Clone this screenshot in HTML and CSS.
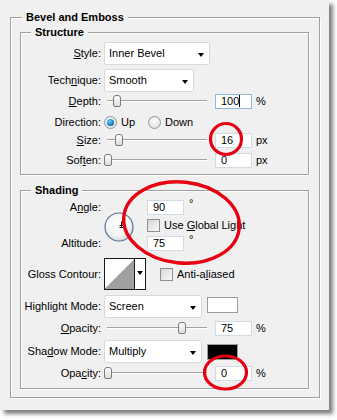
FILE: index.html
```html
<!DOCTYPE html>
<html lang="en">
<head>
<meta charset="utf-8">
<title>Bevel and Emboss</title>
<link rel="stylesheet" href="styles.css">
</head>
<body>
<div class="panel">
  <section class="group outer">
    <h2 class="legend legend-outer">Bevel and Emboss</h2>

    <section class="group inner structure">
      <h3 class="legend">Structure</h3>

      <div class="row r-style">
        <span class="lbl"><u>S</u>tyle:</span>
        <div class="select sel-style"><span>Inner Bevel</span><i class="caret"></i></div>
      </div>

      <div class="row r-tech">
        <span class="lbl">Tech<u>n</u>ique:</span>
        <div class="select sel-tech"><span>Smooth</span><i class="caret"></i></div>
      </div>

      <div class="row r-depth">
        <span class="lbl"><u>D</u>epth:</span>
        <div class="ctrl">
          <div class="slider"><span class="track"></span><span class="thumb" style="left:9px"></span></div>
          <div class="num focus">100<span class="cursor"></span></div>
          <span class="unit">%</span>
        </div>
      </div>

      <div class="row r-dir">
        <span class="lbl">Direction:</span>
        <div class="ctrl">
          <span class="opt opt-up"><span class="radio on"></span>Up</span>
          <span class="opt"><span class="radio"></span>Down</span>
        </div>
      </div>

      <div class="row r-size">
        <span class="lbl"><u>S</u>ize:</span>
        <div class="ctrl">
          <div class="slider"><span class="track"></span><span class="thumb" style="left:11px"></span></div>
          <div class="num">16</div>
          <span class="unit">px</span>
        </div>
      </div>

      <div class="row r-soften">
        <span class="lbl">Sof<u>t</u>en:</span>
        <div class="ctrl">
          <div class="slider"><span class="track"></span><span class="thumb" style="left:0px"></span></div>
          <div class="num">0</div>
          <span class="unit">px</span>
        </div>
      </div>
    </section>

    <section class="group inner shading">
      <h3 class="legend">Shading</h3>

      <div class="angle-block">
        <span class="lbl a-lbl">A<u>n</u>gle:</span>
        <div class="dial">
          <svg width="30" height="30" viewBox="0 0 30 30">
            <defs>
              <radialGradient id="dg" cx="45%" cy="40%" r="60%">
                <stop offset="0" stop-color="#ffffff"/>
                <stop offset="0.7" stop-color="#f2f2f2"/>
                <stop offset="1" stop-color="#d8dbe0"/>
              </radialGradient>
            </defs>
            <circle cx="15" cy="15" r="14" fill="url(#dg)" stroke="#5d7392" stroke-width="1.2"/>
            <path d="M17.5 9.5v5.5M15.5 13.5h5M15.5 15.5h5" stroke="#111" stroke-width="1" fill="none"/>
          </svg>
        </div>
        <div class="a-in a-r1"><div class="num">90</div><span class="deg">°</span></div>
        <div class="a-in a-r2"><span class="check"></span><span>Use <u>G</u>lobal Light</span></div>
        <span class="lbl alt-lbl">Altitude:</span>
        <div class="a-in a-r3"><div class="num">75</div><span class="deg">°</span></div>
      </div>

      <div class="row r-gloss">
        <span class="lbl">Gloss Contour:</span>
        <div class="ctrl">
          <div class="contour"><span class="curve"></span><span class="c-arrow"><i class="caret"></i></span></div>
          <span class="check anti"></span><span>Anti-a<u>l</u>iased</span>
        </div>
      </div>

      <div class="row r-hmode">
        <span class="lbl">Highlight Mode:</span>
        <div class="ctrl">
          <div class="select sel-mode"><span>Screen</span><i class="caret"></i></div>
          <span class="swatch white"></span>
        </div>
      </div>

      <div class="row r-hop">
        <span class="lbl"><u>O</u>pacity:</span>
        <div class="ctrl">
          <div class="slider"><span class="track"></span><span class="thumb" style="left:74px"></span></div>
          <div class="num">75</div>
          <span class="unit">%</span>
        </div>
      </div>

      <div class="row r-smode">
        <span class="lbl">Sha<u>d</u>ow Mode:</span>
        <div class="ctrl">
          <div class="select sel-mode"><span>Multiply</span><i class="caret"></i></div>
          <span class="swatch black"></span>
        </div>
      </div>

      <div class="row r-sop">
        <span class="lbl">Opa<u>c</u>ity:</span>
        <div class="ctrl">
          <div class="slider"><span class="track"></span><span class="thumb" style="left:0px"></span></div>
          <div class="num">0</div>
          <span class="unit">%</span>
        </div>
      </div>
    </section>
  </section>
</div>

<svg class="marks" width="337" height="420" viewBox="0 0 337 420">
  <circle cx="226" cy="139" r="15.5" fill="none" stroke="#e60012" stroke-width="3.2"/>
  <ellipse cx="181.5" cy="222.5" rx="58" ry="40.5" transform="rotate(6 181.5 222.5)" fill="none" stroke="#e60012" stroke-width="3.4"/>
  <ellipse cx="225.5" cy="372.5" rx="21" ry="16.5" fill="none" stroke="#e60012" stroke-width="3.2"/>
</svg>
</body>
</html>
```

FILE: styles.css
```css
* { box-sizing: border-box; }

html, body {
  margin: 0;
  padding: 0;
  background: #ffffff;
}

body {
  position: relative;
  width: 337px;
  height: 420px;
  overflow: hidden;
  font-family: "Liberation Sans", Arial, sans-serif;
  font-size: 11px;
  line-height: 13px;
  color: #000;
}

.panel {
  width: 329px;
  height: 410px;
  background: #f0f0f0;
  padding: 17px 9px 0 10px;
  box-shadow: 4px 4px 4px rgba(0, 0, 0, 0.5);
}

.group {
  position: relative;
  border: 1px solid #a0a0a0;
  box-shadow: 1px 1px 0 #ffffff, inset 1px 1px 0 #ffffff;
}

.outer {
  width: 310px;
  padding: 14px 10px 8px 9px;
}

.inner {
  width: 289px;
}

.structure {
  padding: 9px 0 6px 0;
}

.shading {
  margin-top: 15px;
  padding: 9px 0 7px 0;
}

.legend {
  position: absolute;
  top: -7px;
  margin: 0;
  padding: 0 4px;
  background: #f0f0f0;
  font-size: 11px;
  line-height: 13px;
  font-weight: bold;
}

.legend-outer { left: 11px; }
.inner > .legend { left: 10px; }

u { text-decoration: underline; text-underline-offset: 1px; }

.row {
  display: grid;
  grid-template-columns: 80px auto;
  column-gap: 3px;
  align-items: center;
}

.lbl {
  text-align: right;
  white-space: nowrap;
}

.ctrl {
  display: flex;
  align-items: center;
  height: 100%;
}

/* row spacing */
.r-style  { height: 23px; }
.r-tech   { height: 23px; margin-top: 4px; }
.r-depth  { height: 16px; margin-top: 1px; }
.r-dir    { height: 16px; margin-top: 5px; }
.r-size   { height: 16px; margin-top: 2px; }
.r-soften { height: 16px; margin-top: 4px; }

.r-gloss  { height: 32px; margin-top: 7px; }
.r-hmode  { height: 23px; margin-top: 5px; }
.r-hop    { height: 16px; margin-top: 2px; }
.r-smode  { height: 23px; margin-top: 4px; }
.r-sop    { height: 16px; margin-top: 2px; }

/* select */
.select {
  position: relative;
  height: 23px;
  background: #ffffff;
  border: 1px solid #d9d9d9;
  border-radius: 2px;
  display: flex;
  align-items: center;
  padding-left: 4px;
}
.sel-style { width: 106px; }
.sel-tech  { width: 90px; }
.sel-mode  { width: 98px; }

.caret {
  position: absolute;
  right: 5px;
  top: 50%;
  margin-top: -1px;
  width: 0;
  height: 0;
  border-left: 3.5px solid transparent;
  border-right: 3.5px solid transparent;
  border-top: 4px solid #000;
}

/* slider */
.slider {
  position: relative;
  width: 106px;
  height: 16px;
  margin-right: 5px;
}
.track {
  position: absolute;
  left: 3px;
  right: 3px;
  top: 7px;
  height: 2px;
  border-top: 1px solid #a3a3a3;
  border-bottom: 1px solid #ffffff;
}
.thumb {
  position: absolute;
  top: 2px;
  width: 8px;
  height: 12px;
  border: 1px solid #7b7b7b;
  border-radius: 3px 3px 2px 2px;
  background: linear-gradient(#ffffff, #dcdcdc);
}

/* number inputs */
.num {
  width: 37px;
  height: 15px;
  background: #ffffff;
  border: 1px solid #d2dbe4;
  padding-left: 5px;
  line-height: 13px;
  display: flex;
  align-items: center;
}
.num.focus { border-color: #8fb8de; }
.cursor {
  display: inline-block;
  width: 1px;
  height: 12px;
  background: #000;
}
.unit { margin-left: 4px; }
.deg { margin-left: 5px; align-self: flex-start; margin-top: -3px; }

/* radios */
.opt {
  display: flex;
  align-items: center;
}
.opt-up { width: 44px; }
.radio {
  position: relative;
  width: 13px;
  height: 13px;
  margin-right: 4px;
  border-radius: 50%;
  border: 1px solid #8e98a3;
  background: radial-gradient(circle at 50% 40%, #ffffff, #d6d6d6);
}
.radio.on::after {
  content: "";
  position: absolute;
  left: 2px;
  top: 2px;
  width: 7px;
  height: 7px;
  border-radius: 50%;
  background: radial-gradient(circle at 40% 35%, #6fd0ff, #0d6aa8 70%, #0a3f66);
}

/* checkbox */
.check {
  width: 13px;
  height: 13px;
  border: 1px solid #8f8f8f;
  background: linear-gradient(135deg, #d5d5d5, #fafafa);
  margin-right: 4px;
  flex: none;
}

/* angle block */
.angle-block {
  display: grid;
  grid-template-columns: 80px 30px auto;
  grid-template-rows: 15px 15px 15px;
  column-gap: 3px;
  row-gap: 3px;
  align-items: center;
}
.a-lbl { grid-column: 1; grid-row: 1; }
.alt-lbl { grid-column: 1; grid-row: 3; }
.dial {
  grid-column: 2;
  grid-row: 1 / 4;
  width: 30px;
  height: 30px;
  margin-top: 3px;
}
.dial svg { display: block; }
.a-in {
  grid-column: 3;
  margin-left: 10px;
  display: flex;
  align-items: center;
  height: 15px;
}
.a-r1 { grid-row: 1; }
.a-r2 { grid-row: 2; }
.a-r3 { grid-row: 3; }

/* contour */
.contour {
  display: flex;
  width: 42px;
  height: 32px;
  border: 1px solid #1a1a1a;
  background: #fff;
  margin-right: 14px;
}
.curve {
  width: 30px;
  height: 100%;
  border-right: 1px solid #1a1a1a;
  background: linear-gradient(to bottom right, #ffffff 50%, #a0a0a0 50%);
}
.c-arrow {
  position: relative;
  flex: 1;
}
.c-arrow .caret { right: 2px; margin-top: -3px; }
.anti { margin-right: 4px; }

/* swatches */
.swatch {
  width: 31px;
  height: 16px;
  margin-left: 5px;
  border: 1px solid #9c9c9c;
}
.swatch.white { background: #ffffff; margin-top: -3px; }
.swatch.black { background: #000000; }

/* annotation marks */
.marks {
  position: absolute;
  left: 0;
  top: 0;
  pointer-events: none;
}
```
